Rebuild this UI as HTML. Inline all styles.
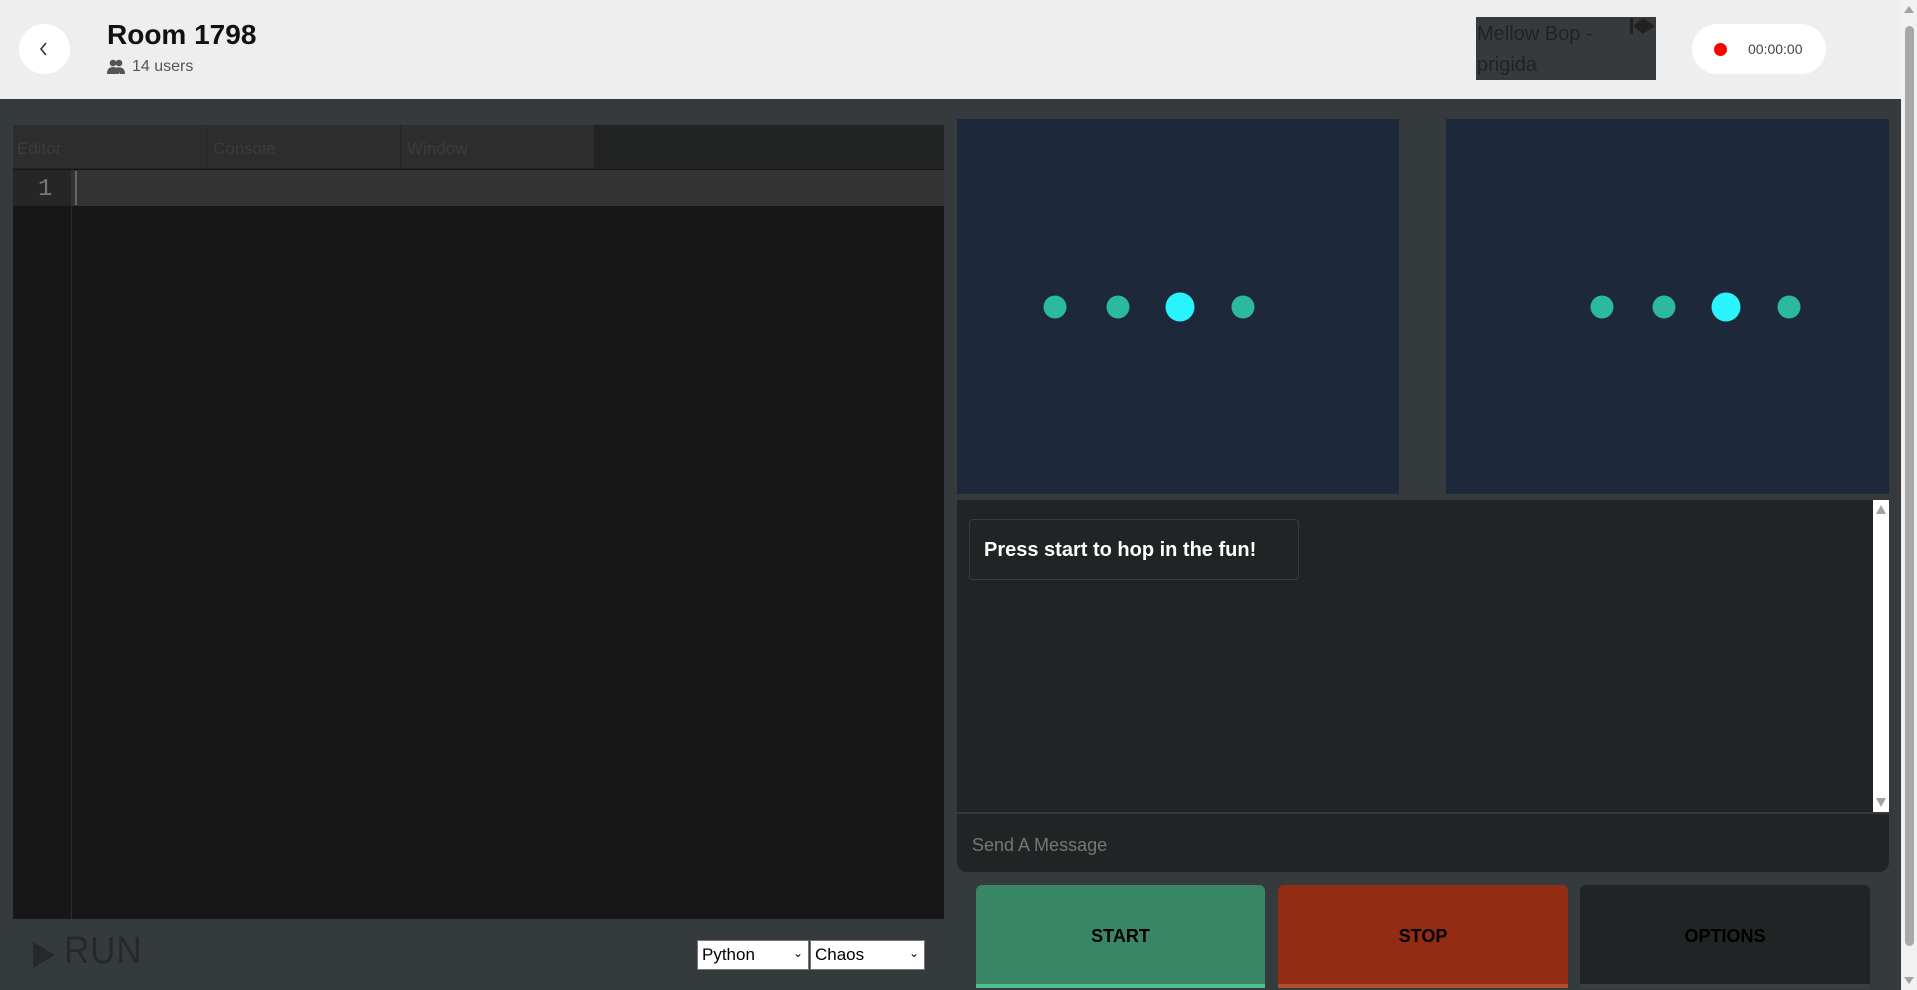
<!DOCTYPE html>
<html><head><meta charset="utf-8"><style>
*{box-sizing:border-box;margin:0;padding:0}
body{width:1917px;height:990px;overflow:hidden;background:#353a3d;font-family:"Liberation Sans",sans-serif;position:relative}
.a{position:absolute}
</style></head><body>
<div class="a" style="left:0;top:0;width:1901px;height:99px;background:#eeeeee"></div>
<div class="a" style="left:19px;top:24px;width:51px;height:50px;border-radius:50%;background:#fff"></div>
<svg class="a" style="left:36px;top:40px" width="16" height="18" viewBox="0 0 16 18"><path d="M10 3 L5 9 L10 15" stroke="#333" stroke-width="1.6" fill="none"/></svg>
<div class="a" style="left:107px;top:19px;font-size:28px;color:#111;font-weight:600">Room 1798</div>
<svg class="a" style="left:106px;top:59px" width="20" height="16" viewBox="0 0 20 16"><circle cx="7" cy="4" r="3.3" fill="#555"/><circle cx="13" cy="4" r="3.3" fill="#555"/><path d="M1 15 Q1 8 7 8 Q13 8 13 15Z M10 8.5 Q19 7 19 15 H14Z" fill="#555"/></svg>
<div class="a" style="left:132px;top:58px;font-size:16px;color:#555">14 users</div>
<div class="a" style="left:1476px;top:17px;width:180px;height:63px;background:#363a3d;color:#222;font-size:20px;line-height:31px;padding-left:1px;padding-top:2px;overflow:hidden">Mellow Bop -<br>prigida</div>
<svg class="a" style="left:1628px;top:17px" width="30" height="18" viewBox="0 0 30 18"><rect x="2" y="1" width="3" height="16" fill="#222"/><path d="M5 9 L15 1 L15 17Z M15 1 L27 9 L15 17Z" fill="#222"/></svg>
<div class="a" style="left:1692px;top:24px;width:134px;height:50px;border-radius:25px;background:#fff"></div>
<div class="a" style="left:1714px;top:43px;width:13px;height:13px;border-radius:50%;background:#f00"></div>
<div class="a" style="left:1748px;top:41px;font-size:14px;color:#444">00:00:00</div>
<div class="a" style="left:1901px;top:0;width:16px;height:990px;background:#f1f1f1"></div>
<div class="a" style="left:1905px;top:26px;width:9px;height:920px;border-radius:5px;background:#a8a8a8"></div>
<div class="a" style="left:1904px;top:6px;width:0;height:0;border-left:5px solid transparent;border-right:5px solid transparent;border-bottom:7px solid #a3a3a3"></div>
<div class="a" style="left:1904px;top:977px;width:0;height:0;border-left:5px solid transparent;border-right:5px solid transparent;border-top:7px solid #a3a3a3"></div>

<div class="a" style="left:13px;top:125px;width:931px;height:794px;background:#171717"></div>
<div class="a" style="left:13px;top:125px;width:931px;height:44px;background:#222424"></div>
<div class="a" style="left:13px;top:125px;width:193px;height:43px;background:#2d2d2d;color:#3c3c3c;font-size:17px;padding:14px 4px">Editor</div>
<div class="a" style="left:207px;top:125px;width:193px;height:43px;background:#2d2d2d;color:#3c3c3c;font-size:17px;padding:14px 6px">Console</div>
<div class="a" style="left:401px;top:125px;width:193px;height:43px;background:#2d2d2d;color:#3c3c3c;font-size:17px;padding:14px 6px">Window</div>
<div class="a" style="left:13px;top:170px;width:931px;height:36px;background:#333"></div>
<div class="a" style="left:13px;top:170px;width:58px;height:36px;background:#262626"></div>
<div class="a" style="left:71px;top:206px;width:1px;height:713px;background:#2c2c2c"></div>
<div class="a" style="left:38px;top:176px;font-size:24px;color:#777;font-family:'Liberation Mono',monospace">1</div>
<div class="a" style="left:75px;top:171px;width:2px;height:34px;background:#666"></div>
<svg class="a" style="left:31px;top:940px" width="26" height="30"><path d="M2 2 L24 15 L2 28Z" fill="#25292b"/></svg>
<div class="a" style="left:64px;top:930px;font-size:38px;color:#25292b;letter-spacing:1px;transform:scaleX(0.92);transform-origin:left">RUN</div>
<div class="a" style="left:697px;top:940px;width:112px;height:30px;background:#fff;border:1px solid #777;font-size:17px;padding:4px 4px;color:#000">Python<span style="position:absolute;right:5px;top:5px;font-size:12px">&#8964;</span></div>
<div class="a" style="left:810px;top:940px;width:115px;height:30px;background:#fff;border:1px solid #777;font-size:17px;padding:4px 4px;color:#000">Chaos<span style="position:absolute;right:5px;top:5px;font-size:12px">&#8964;</span></div>

<div class="a" style="left:957px;top:119px;width:442px;height:375px;background:#1d283b"></div>
<div class="a" style="left:1446px;top:119px;width:443px;height:375px;background:#1d283b"></div>
<svg class="a" style="left:0;top:0" width="1917" height="990">
<g fill="#2bb9a2"><circle cx="1055" cy="307" r="11.5"/><circle cx="1118" cy="307" r="11.5"/><circle cx="1243" cy="307" r="11.5"/>
<circle cx="1602" cy="307" r="11.5"/><circle cx="1664" cy="307" r="11.5"/><circle cx="1789" cy="307" r="11.5"/></g>
<g fill="#29f4fb"><circle cx="1180" cy="307" r="14.5"/><circle cx="1726" cy="307" r="14.5"/></g>
</svg>

<div class="a" style="left:957px;top:500px;width:932px;height:372px;background:#212424;border-radius:0 0 10px 10px"></div>
<div class="a" style="left:1873px;top:500px;width:16px;height:313px;background:#fff"></div>
<div class="a" style="left:1876px;top:505px;width:0;height:0;border-left:5px solid transparent;border-right:5px solid transparent;border-bottom:9px solid #a3a3a3"></div>
<div class="a" style="left:1876px;top:798px;width:0;height:0;border-left:5px solid transparent;border-right:5px solid transparent;border-top:9px solid #a3a3a3"></div>
<div class="a" style="left:957px;top:812px;width:932px;height:2px;background:#353a3d"></div>
<div class="a" style="left:969px;top:519px;width:330px;height:61px;border:1px solid #383c3e;border-radius:4px;color:#fff;font-weight:bold;font-size:20px;padding:19px 14px">Press start to hop in the fun!</div>
<div class="a" style="left:972px;top:835px;font-size:18px;color:#777">Send A Message</div>

<div class="a" style="left:976px;top:885px;width:289px;height:103px;background:#388666;border-radius:6px 6px 0 0;border-bottom:4px solid #4cc08e;font-weight:bold;font-size:18px;text-align:center;line-height:102px;color:#000">START</div>
<div class="a" style="left:1278px;top:885px;width:290px;height:103px;background:#922c12;border-radius:6px 6px 0 0;border-bottom:4px solid #b24c32;font-weight:bold;font-size:18px;text-align:center;line-height:102px;color:#000">STOP</div>
<div class="a" style="left:1580px;top:885px;width:290px;height:103px;background:#212424;border-radius:6px 6px 0 0;border-bottom:4px solid #3a3f42;font-weight:bold;font-size:18px;text-align:center;line-height:102px;color:#000">OPTIONS</div>
</body></html>
